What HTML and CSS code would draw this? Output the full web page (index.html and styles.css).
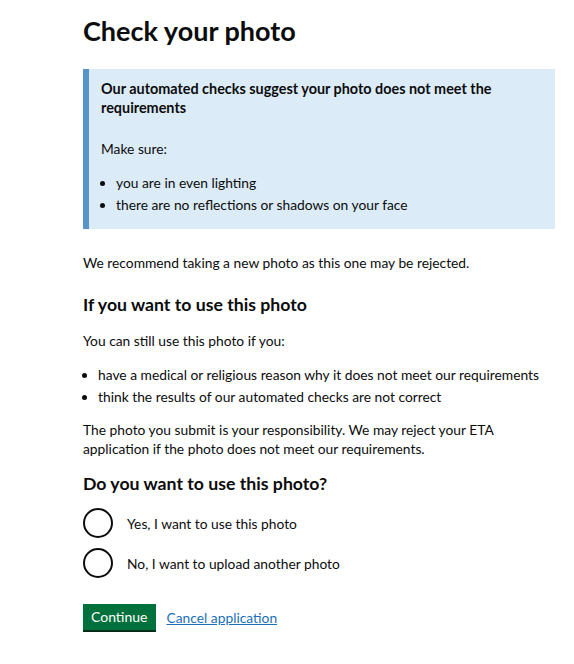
FILE: index.html
```html
<!DOCTYPE html>
<html lang="en">
<head>
    <meta charset="UTF-8">
    <meta name="viewport" content="width=device-width, initial-scale=1.0">
    <title>Check your photo</title>
    <link rel="stylesheet" href="styles.css">
</head>
<body>
    <main class="main-wrapper">
        <h1 class="heading-l">Check your photo</h1>

        <div class="warning-panel">
            <p class="warning-title">Our automated checks suggest your photo does not meet the requirements</p>
            <p class="body-text">Make sure:</p>
            <ul class="bullet-list">
                <li>you are in even lighting</li>
                <li>there are no reflections or shadows on your face</li>
            </ul>
        </div>

        <p class="body-text recommend-text">We recommend taking a new photo as this one may be rejected.</p>

        <h2 class="heading-m">If you want to use this photo</h2>
        <p class="body-text">You can still use this photo if you:</p>
        <ul class="bullet-list">
            <li>have a medical or religious reason why it does not meet our requirements</li>
            <li>think the results of our automated checks are not correct</li>
        </ul>
        <p class="body-text">The photo you submit is your responsibility. We may reject your ETA application if the photo does not meet our requirements.</p>

        <form class="photo-form">
            <fieldset class="fieldset">
                <legend class="heading-m">Do you want to use this photo?</legend>
                <div class="radios">
                    <label class="radio-item">
                        <input type="radio" name="usePhoto" value="yes">
                        <span>Yes, I want to use this photo</span>
                    </label>
                    <label class="radio-item">
                        <input type="radio" name="usePhoto" value="no">
                        <span>No, I want to upload another photo</span>
                    </label>
                </div>
            </fieldset>

            <div class="button-group">
                <button type="submit" class="button">Continue</button>
                <a href="#" class="link">Cancel application</a>
            </div>
        </form>
    </main>
</body>
</html>
```

FILE: styles.css
```css
body {
    margin: 0;
    font-family: Lato, Arial, sans-serif;
    color: #0b0c0c;
    background: #fff;
}

.main-wrapper {
    width: 472px;
    padding: 16px 0 20px 83px;
}

.heading-l {
    font-size: 27px;
    font-weight: 700;
    line-height: 30px;
    margin: 0 0 23px;
}

.heading-m {
    font-size: 17.7px;
    font-weight: 700;
    line-height: 22px;
    margin: 0 0 15px;
    padding: 0;
}

.body-text {
    font-size: 13.8px;
    line-height: 19px;
    margin: 0 0 15px;
}

.recommend-text {
    margin-bottom: 22px;
}

.warning-panel {
    background-color: #dbebf7;
    border-left: 6px solid #5694ca;
    padding: 10px 12px 15px 12px;
    margin-bottom: 24px;
}

.warning-title {
    font-size: 14.4px;
    font-weight: 700;
    line-height: 19px;
    margin: 0 0 22px;
}

.warning-panel .bullet-list {
    margin-bottom: 0;
}

.bullet-list {
    font-size: 13.8px;
    line-height: 19px;
    margin: 0 0 14px;
    padding-left: 15px;
}

.bullet-list li + li {
    margin-top: 3px;
}

.fieldset {
    border: none;
    margin: 0;
    padding: 0;
}

.fieldset .heading-m {
    margin-bottom: 13px;
}

.radios {
    display: flex;
    flex-direction: column;
    gap: 10px;
}

.radio-item {
    display: flex;
    align-items: center;
    gap: 14px;
    font-size: 13.8px;
    cursor: pointer;
}

.radio-item input {
    appearance: none;
    width: 30px;
    height: 30px;
    margin: 0;
    border: 2px solid #0b0c0c;
    border-radius: 50%;
    background: #fff;
}

.button-group {
    display: flex;
    align-items: center;
    gap: 11px;
    margin-top: 26px;
}

.button {
    background-color: #00703c;
    color: #fff;
    border: none;
    box-shadow: 0 2px 0 #002d18;
    font-family: inherit;
    font-size: 14px;
    line-height: 18px;
    padding: 4px 8px;
    cursor: pointer;
}

.link {
    color: #1d70b8;
    font-size: 13.8px;
    text-decoration: underline;
}
```
